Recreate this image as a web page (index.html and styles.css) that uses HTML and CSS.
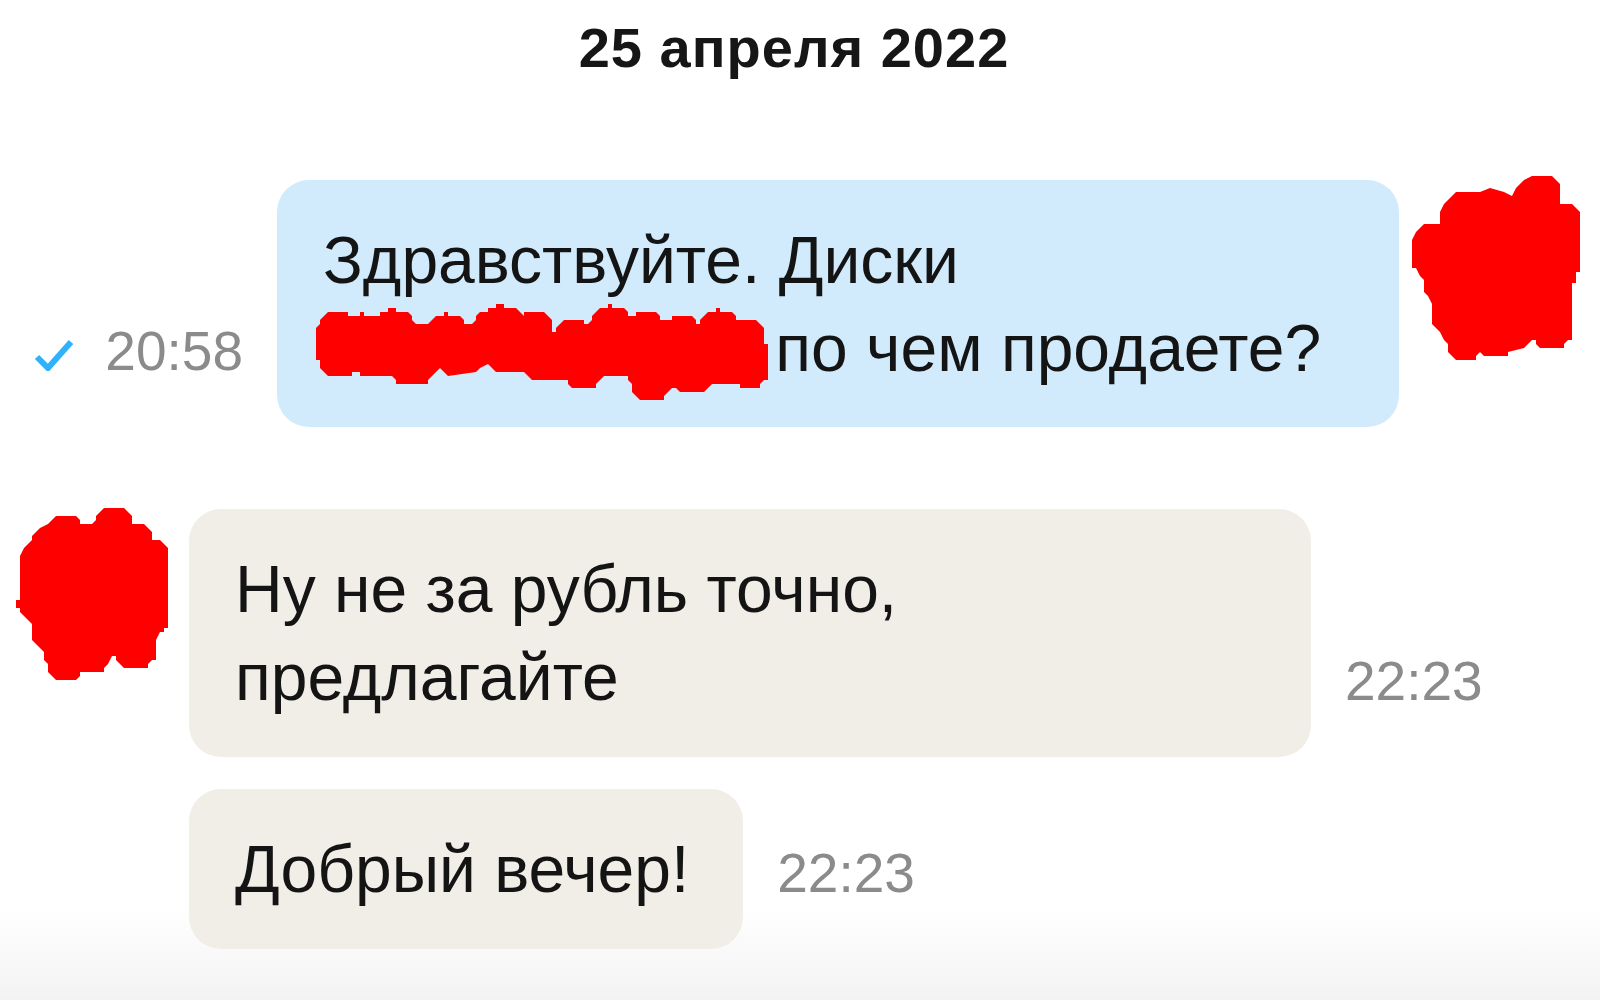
FILE: index.html
```html
<!DOCTYPE html>
<html lang="ru">
<head>
<meta charset="utf-8">
<title>Чат</title>
<link rel="stylesheet" href="styles.css">
</head>
<body>
<main class="chat">
  <div class="date">25 апреля 2022</div>

  <div class="row-out">
    <div class="meta">
      <svg class="check" width="40" height="32" viewBox="0 0 40 32"><path d="M3 18 L14 29 L37 3" fill="none" stroke="#2fb1fb" stroke-width="6" stroke-linejoin="miter"/></svg>
      <span class="time">20:58</span>
    </div>
    <div class="bubble bubble-out">Здравствуйте. Диски <svg class="redact" width="452" height="96" viewBox="0 0 452 96"><path fill="#ff0000" d="M0 56 L0 24 L4 20 L4 16 L8 12 L12 8 L32 8 L32 12 L44 12 L44 8 L48 8 L48 12 L64 12 L64 8 L72 8 L72 4 L80 4 L80 8 L92 8 L96 12 L96 16 L100 20 L112 20 L116 16 L120 12 L128 12 L128 8 L132 8 L132 12 L144 12 L148 16 L148 20 L156 20 L160 16 L160 12 L164 8 L172 8 L172 4 L180 4 L180 0 L188 0 L188 4 L200 4 L204 8 L208 12 L208 8 L228 8 L232 12 L236 16 L236 28 L240 28 L240 24 L244 20 L248 16 L268 16 L268 20 L272 20 L276 16 L276 12 L280 8 L284 4 L292 4 L292 0 L296 0 L296 4 L308 4 L312 8 L312 12 L320 12 L320 8 L340 8 L344 12 L344 16 L356 16 L356 12 L376 12 L380 16 L380 20 L384 20 L384 16 L388 12 L392 8 L400 8 L400 4 L404 4 L404 8 L416 8 L420 12 L420 16 L440 16 L444 20 L448 24 L448 40 L452 40 L452 76 L448 76 L444 80 L444 84 L424 84 L424 80 L396 80 L392 84 L388 88 L364 88 L360 84 L356 84 L352 88 L348 92 L348 96 L324 96 L320 92 L316 88 L316 80 L312 76 L312 72 L288 72 L284 76 L280 80 L280 84 L256 84 L252 80 L252 76 L216 76 L212 72 L208 68 L180 68 L176 64 L172 60 L164 64 L160 68 L132 72 L128 68 L124 64 L120 68 L116 72 L112 76 L112 80 L80 80 L80 76 L76 72 L44 72 L44 68 L36 68 L36 72 L12 72 L8 68 L4 64 L4 56 Z"/></svg> по чем продаете?</div>
    <svg class="avatar avatar-right" width="168" height="184" viewBox="0 0 168 184"><path fill="#ff0000" d="M44 16 L68 16 L78 12 L92 16 L100 20 L104 12 L112 4 L120 0 L140 0 L144 4 L148 8 L148 28 L160 28 L164 32 L168 36 L168 96 L164 96 L164 107 L160 107 L160 164 L156 164 L152 168 L152 172 L128 172 L124 168 L124 164 L120 164 L116 168 L112 172 L96 176 L96 180 L72 180 L68 176 L64 180 L64 184 L44 184 L40 180 L36 176 L36 168 L32 164 L28 156 L24 152 L20 148 L20 128 L16 120 L12 116 L12 104 L8 100 L4 92 L0 92 L0 64 L4 56 L8 52 L12 48 L28 48 L28 36 L32 28 L36 24 L40 20 Z"/></svg>
  </div>

  <div class="group-in">
    <svg class="avatar avatar-left" width="152" height="172" viewBox="0 0 152 172"><path fill="#ff0000" d="M40 8 L60 8 L64 12 L64 16 L76 16 L80 12 L80 8 L84 4 L88 0 L108 0 L112 4 L116 8 L116 16 L128 16 L132 20 L136 24 L136 32 L144 32 L148 36 L152 40 L152 120 L148 120 L148 124 L144 124 L140 132 L140 152 L136 152 L132 156 L132 160 L108 160 L104 156 L100 152 L100 148 L96 148 L92 156 L88 160 L88 164 L64 164 L64 168 L60 172 L40 172 L36 168 L32 164 L32 156 L28 152 L28 144 L24 140 L20 136 L16 132 L16 116 L12 112 L8 108 L4 104 L4 100 L0 100 L0 92 L4 92 L4 48 L8 40 L12 36 L16 32 L16 28 L20 24 L24 20 L32 16 L36 12 Z"/></svg>
    <div class="stack">
      <div class="row-in">
        <div class="bubble bubble-in">Ну не за рубль точно, предлагайте</div>
        <span class="time">22:23</span>
      </div>
      <div class="row-in">
        <div class="bubble bubble-in">Добрый вечер!</div>
        <span class="time">22:23</span>
      </div>
    </div>
  </div>
</main>
</body>
</html>
```

FILE: styles.css
```css
html, body {
  margin: 0;
  padding: 0;
}

body {
  min-height: 1000px;
  background: linear-gradient(to bottom, #ffffff 0, #ffffff 905px, #fafafa 945px, #f3f3f3 1000px);
  font-family: "Liberation Sans", Arial, sans-serif;
  color: #141414;
  overflow: hidden;
}

.chat {
  padding-top: 14px;
}

.date {
  font-size: 56px;
  line-height: 67px;
  font-weight: 700;
  letter-spacing: 1px;
  text-align: center;
  color: #161616;
  padding-right: 12px;
  margin-bottom: 99px;
}

.row-out {
  display: flex;
  justify-content: flex-end;
  align-items: flex-end;
  padding-right: 20px;
}

.meta {
  display: flex;
  align-items: flex-end;
  gap: 31px;
  margin-right: 34px;
}

.check {
  display: block;
  margin-bottom: 8px;
  padding-bottom: 48px;
  box-sizing: content-box;
}

.time {
  font-size: 55px;
  line-height: 55px;
  color: #8b8b8b;
  padding-bottom: 48px;
  white-space: nowrap;
}

.bubble {
  font-size: 66px;
  line-height: 88px;
  padding: 36px 46px 35px;
  border-radius: 32px;
  box-sizing: border-box;
  max-width: 1122px;
}

.bubble-out {
  background: #d1ebfc;
  width: 1122px;
}

.bubble-in {
  background: #f1eee8;
  padding-right: 54px;
}

.redact {
  display: inline-block;
  vertical-align: -21px;
  margin-top: 0;
  margin-bottom: -8px;
  margin-left: -7px;
  margin-right: -11px;
}

.avatar {
  display: block;
  flex: none;
  align-self: flex-start;
}

.avatar-right {
  margin-left: 13px;
  margin-top: -4px;
}

.group-in {
  display: flex;
  align-items: flex-start;
  margin-top: 82px;
  padding-left: 16px;
}

.avatar-left {
  margin-top: -1px;
  margin-right: 21px;
}

.stack {
  display: flex;
  flex-direction: column;
  align-items: flex-start;
  gap: 32px;
}

.row-in {
  display: flex;
  align-items: flex-end;
  gap: 34px;
}

.row-in .bubble-in {
  padding-bottom: 36px;
}
```
